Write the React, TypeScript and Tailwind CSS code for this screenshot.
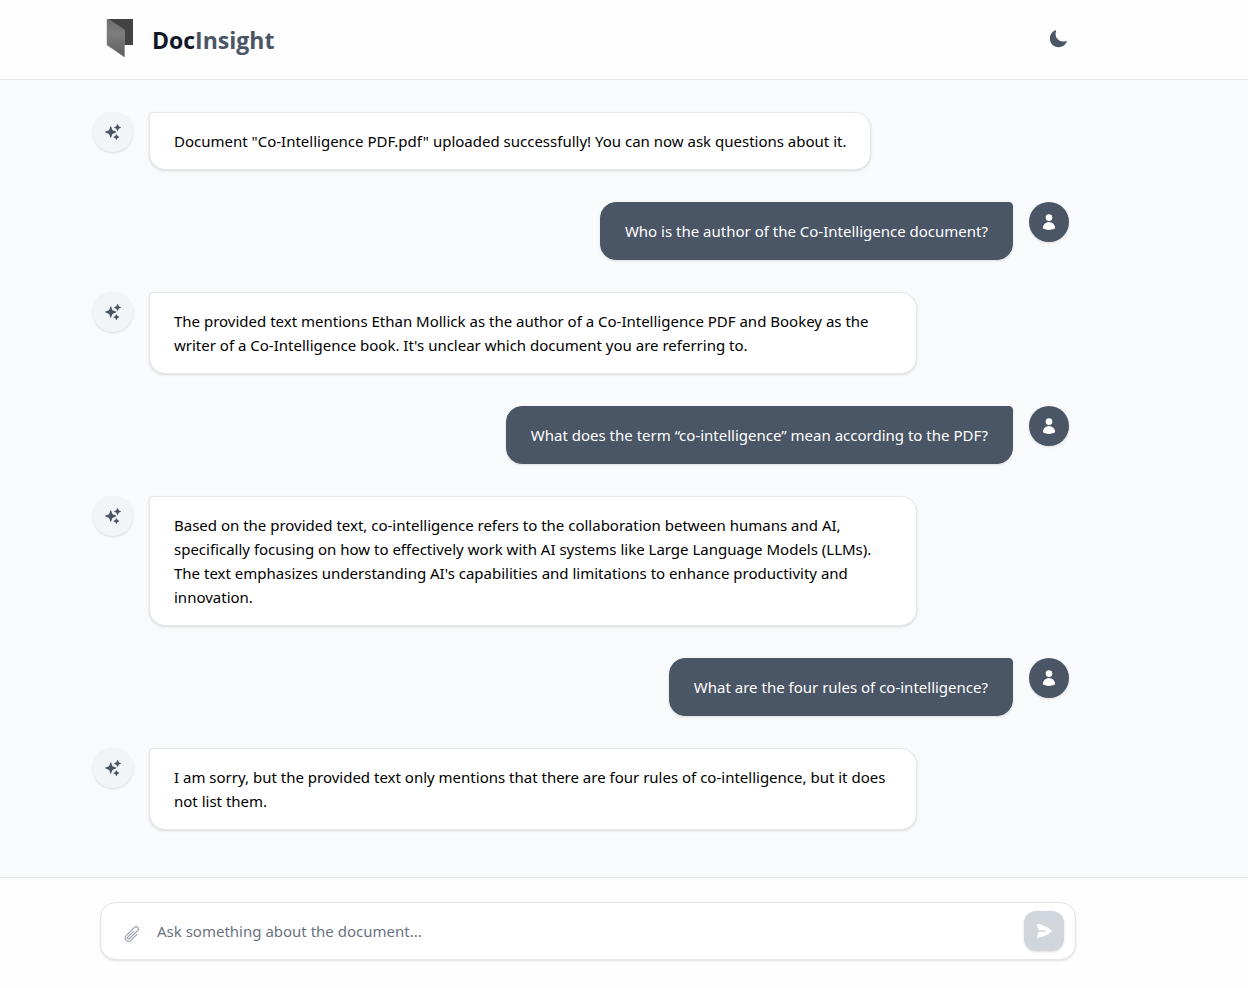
import { useState } from "react";
import { HiMiniPaperAirplane, HiMoon, HiOutlinePaperClip, HiSparkles, HiUser } from "react-icons/hi2";

type Message = { from: "bot" | "user"; text: string };

const messages: Message[] = [
  { from: "bot", text: 'Document "Co-Intelligence PDF.pdf" uploaded successfully! You can now ask questions about it.' },
  { from: "user", text: "Who is the author of the Co-Intelligence document?" },
  {
    from: "bot",
    text: "The provided text mentions Ethan Mollick as the author of a Co-Intelligence PDF and Bookey as the writer of a Co-Intelligence book. It's unclear which document you are referring to.",
  },
  { from: "user", text: "What does the term “co-intelligence” mean according to the PDF?" },
  {
    from: "bot",
    text: "Based on the provided text, co-intelligence refers to the collaboration between humans and AI, specifically focusing on how to effectively work with AI systems like Large Language Models (LLMs). The text emphasizes understanding AI's capabilities and limitations to enhance productivity and innovation.",
  },
  { from: "user", text: "What are the four rules of co-intelligence?" },
  {
    from: "bot",
    text: "I am sorry, but the provided text only mentions that there are four rules of co-intelligence, but it does not list them.",
  },
];

function Logo() {
  return (
    <svg width="40" height="40" viewBox="0 1 40 40" aria-hidden="true">
      <defs>
        <linearGradient id="flap" x1="0" y1="0" x2="0" y2="1">
          <stop offset="0" stopColor="#6c6c6c" />
          <stop offset="0.4" stopColor="#7d7d7d" />
          <stop offset="1" stopColor="#5c5c5c" />
        </linearGradient>
      </defs>
      <path d="M7 0H33V27H7Z" fill="#434343" />
      <path d="M7 0.5L24.5 12V39L7 27Z" fill="url(#flap)" stroke="#8b8b8b" strokeWidth="0.6" />
    </svg>
  );
}

function MessageRow({ message }: { message: Message }) {
  if (message.from === "user") {
    return (
      <li className="flex items-start justify-end gap-4">
        <p className="max-w-3xl rounded-2xl rounded-tr-sm border border-[#4a5565] bg-[#4a5565] px-6 py-4 text-white shadow-sm">
          {message.text}
        </p>
        <span className="flex size-10 shrink-0 items-center justify-center rounded-full bg-[#4a5565] text-white shadow-sm">
          <HiUser className="size-[18px]" />
        </span>
      </li>
    );
  }
  return (
    <li className="flex items-start gap-4">
      <span className="flex size-10 shrink-0 items-center justify-center rounded-full bg-gray-100 text-[#4a5565] shadow-sm">
        <HiSparkles className="size-[18px]" />
      </span>
      <p className="max-w-3xl rounded-2xl rounded-tl-sm border border-gray-200 bg-white px-6 py-4 text-black shadow-sm">
        {message.text}
      </p>
    </li>
  );
}

export default function App() {
  const [question, setQuestion] = useState("");

  return (
    <div className="flex min-h-screen flex-col bg-[#f9fafc] font-['Noto_Sans',sans-serif] text-[15px] leading-6">
      <header className="border-b border-gray-200 bg-[#fefefe] pr-[72px]">
        <div className="mx-auto flex h-[79px] max-w-[976px] items-center justify-between">
          <div className="flex items-center gap-3">
            <span className="pb-px">
              <Logo />
            </span>
            <h1 className="font-['Open_Sans',sans-serif] text-[23px] leading-8 font-bold text-gray-900">
              Doc<span className="text-[#4a5565]">Insight</span>
            </h1>
          </div>
          <button type="button" aria-label="Toggle dark mode" className="px-2 pt-2 pb-[10px] text-[#4a5565]">
            <HiMoon className="size-5" />
          </button>
        </div>
      </header>

      <main className="flex-1 pt-8 pr-[86px] pb-[47px]">
        <ul className="mx-auto flex max-w-[976px] flex-col gap-8">
          {messages.map((message) => (
            <MessageRow key={message.text} message={message} />
          ))}
        </ul>
      </main>

      <footer className="border-t border-gray-200 bg-[#fefefe] pt-6 pr-[72px] pb-7">
        <form
          onSubmit={(event) => event.preventDefault()}
          className="mx-auto flex h-[58px] max-w-[976px] items-center rounded-2xl border border-gray-200 bg-white pr-[11px] pb-px pl-[22px] shadow-sm"
        >
          <button type="button" aria-label="Attach a file" className="pt-[6px] text-gray-400">
            <HiOutlinePaperClip className="size-[18px]" />
          </button>
          <input
            type="text"
            aria-label="Question"
            value={question}
            onChange={(event) => setQuestion(event.target.value)}
            placeholder="Ask something about the document..."
            className="min-w-0 flex-1 px-4 placeholder:text-gray-500 focus:outline-none"
          />
          <button
            type="submit"
            aria-label="Send"
            className="flex size-10 items-center justify-center rounded-xl bg-gray-300 text-white shadow-sm"
          >
            <HiMiniPaperAirplane className="size-[18px]" />
          </button>
        </form>
      </footer>
    </div>
  );
}
